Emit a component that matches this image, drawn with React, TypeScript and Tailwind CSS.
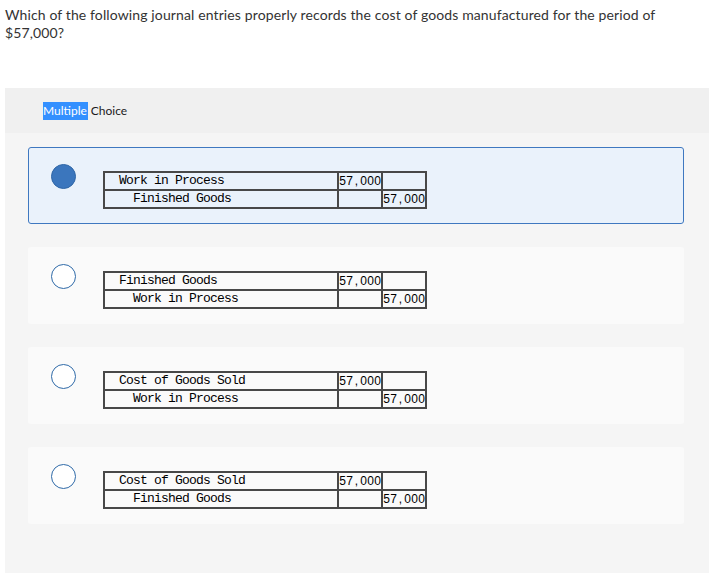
import React from "react";

type Opt = { debit: string; credit: string; selected?: boolean };

const options: Opt[] = [
  { debit: "Work in Process", credit: "Finished Goods", selected: true },
  { debit: "Finished Goods", credit: "Work in Process" },
  { debit: "Cost of Goods Sold", credit: "Work in Process" },
  { debit: "Cost of Goods Sold", credit: "Finished Goods" },
];

function Radio({ selected }: { selected?: boolean }) {
  return selected ? (
    <div className="w-[25px] h-[25px] rounded-full bg-[#3b76bd] border border-[#2f66a6] shrink-0" />
  ) : (
    <div className="w-[25px] h-[25px] rounded-full bg-white border-[1.5px] border-[#2f6aa8] shrink-0" />
  );
}

function Amount() {
  return (
    <span className="inline-flex font-['Liberation_Sans',sans-serif] text-[12px] tracking-normal">
      {"57,000".split("").map((c, i) => (
        <span key={i} className="inline-block w-[7px] text-center">
          {c}
        </span>
      ))}
    </span>
  );
}

function Entry({ debit, credit }: { debit: string; credit: string }) {
  const mono =
    "font-['Liberation_Mono',monospace] text-[13px] tracking-[-0.8px] text-black leading-[14px] whitespace-pre";
  const td = "border-2 border-[#484848] h-[18px] p-0 align-middle";
  return (
    <table className="border-collapse table-fixed mt-[7px] w-[322px]">
      <colgroup>
        <col className="w-[234px]" />
        <col className="w-[44px]" />
        <col className="w-[44px]" />
      </colgroup>
      <tbody>
        <tr>
          <td className={`${td} ${mono}`}>{"  " + debit}</td>
          <td className={`${td} ${mono}`}>
            <Amount />
          </td>
          <td className={`${td} ${mono}`}></td>
        </tr>
        <tr>
          <td className={`${td} ${mono}`}>{"    " + credit}</td>
          <td className={`${td} ${mono}`}></td>
          <td className={`${td} ${mono}`}>
            <Amount />
          </td>
        </tr>
      </tbody>
    </table>
  );
}

export default function App() {
  return (
    <div className="bg-white min-h-[573px] font-['Lato','Open_Sans',sans-serif]">
      <p className="px-[5px] pt-[6px] text-[14px] leading-[18px] tracking-[0.12px] text-[#333] m-0 w-[700px]">
        Which of the following journal entries properly records the cost of goods manufactured for the period of $57,000?
      </p>
      <div className="mt-[46px] ml-[5px] w-[704px] bg-[#f5f5f5] pb-[60px]">
        <div className="h-[45px] bg-[#f0f0f0] flex items-center pl-[38px] text-[12px] text-[#1a1a1a]">
          <span className="bg-[#3390ff] text-white pr-px">Multiple</span>
          <span className="ml-[3px]">Choice</span>
        </div>
        <div className="flex flex-col gap-[23px] pt-[14px] pl-[23px] pr-[25px]">
          {options.map((o, i) => (
            <div
              key={i}
              className={`h-[77px] rounded-[3px] border flex items-start pl-[22px] pt-[16px] ${
                o.selected ? "bg-[#eaf2fb] border-[#3f78c0]" : "bg-[#fafafa] border-transparent"
              }`}
            >
              <Radio selected={o.selected} />
              <div className="ml-[27px]">
                <Entry debit={o.debit} credit={o.credit} />
              </div>
            </div>
          ))}
        </div>
      </div>
    </div>
  );
}
